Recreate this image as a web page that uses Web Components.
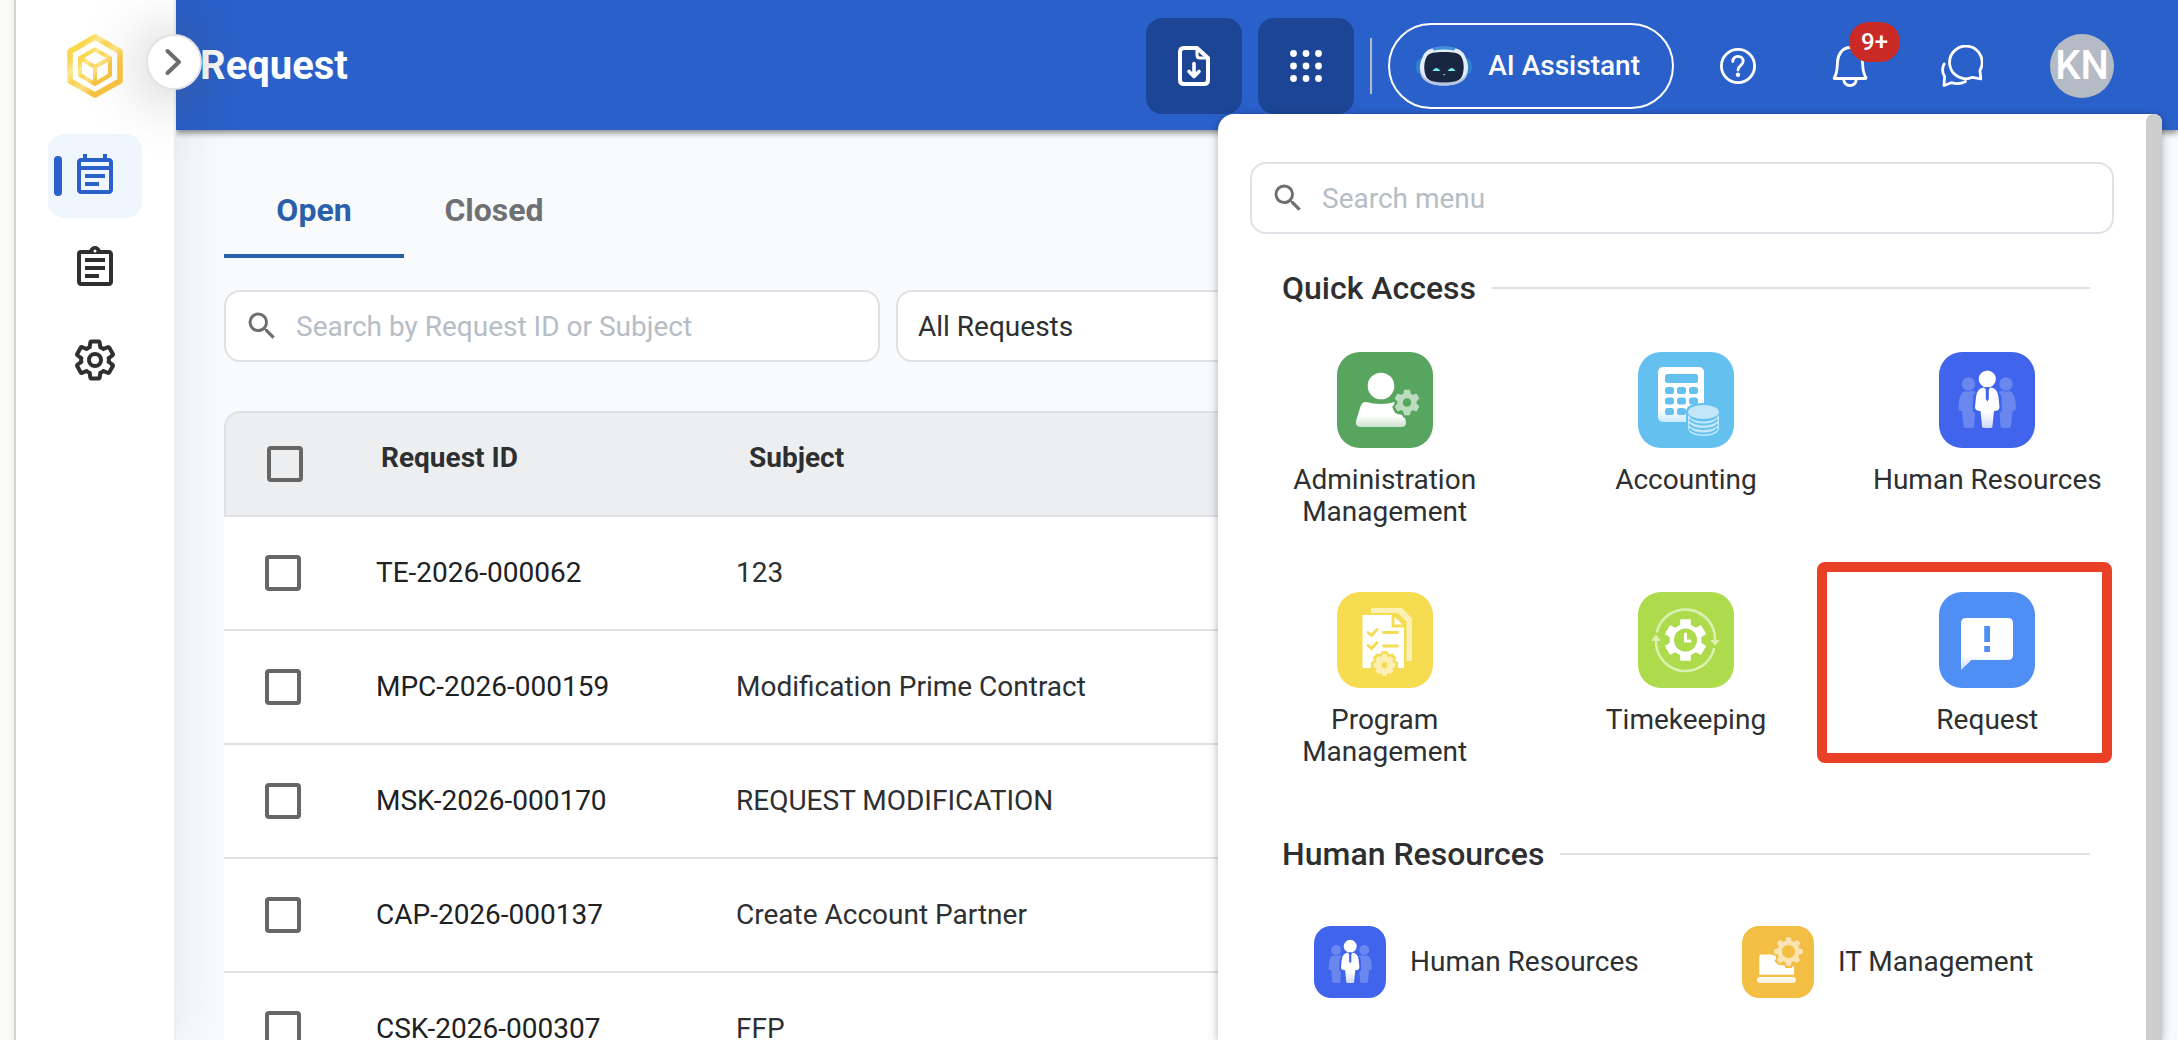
<!DOCTYPE html>
<html lang="en">
<head>
<meta charset="utf-8">
<title>Request</title>
<style>
  html, body { margin: 0; height: 100%; }
  body {
    font-family: Roboto, "Liberation Sans", sans-serif;
    font-size: 28px; line-height: 32px; color: #2d2f31;
    background: #fafaf8; overflow: hidden;
  }
</style>
</head>
<body>
<app-shell>
  <side-nav slot="nav"></side-nav>
  <top-bar slot="bar" heading="Request"></top-bar>
  <request-page slot="page"></request-page>
  <app-menu slot="menu"></app-menu>
</app-shell>

<script>
const gear = (cx, cy, outer, root, teeth, base, tip) => {
  let d = '';
  for (let i = 0; i < teeth; i++) {
    const a = -90 + i * 360 / teeth;
    for (const [r, o] of [[root, -base], [outer, -tip], [outer, tip], [root, base]]) {
      const t = (a + o) * Math.PI / 180;
      d += (d ? 'L' : 'M') + (cx + r * Math.cos(t)).toFixed(2) + ' ' + (cy + r * Math.sin(t)).toFixed(2);
    }
  }
  return d + 'Z';
};
const hole = (cx, cy, r) => `M${cx - r} ${cy}a${r} ${r} 0 1 0 ${2 * r} 0a${r} ${r} 0 1 0 ${-2 * r} 0Z`;
const fade = (id, y1, y2, to = .65) => `<defs><linearGradient id="${id}" gradientUnits="userSpaceOnUse" x1="0" x2="0" y1="${y1}" y2="${y2}"><stop stop-color="#fff"/><stop offset="1" stop-color="#fff" stop-opacity="${to}"/></linearGradient></defs>`;
const tile = (color, art) => `<rect width="96" height="96" rx="23" fill="${color}"/>${art}`;

const ICONS = {
  logo: ['0 0 56 64', `<defs><linearGradient id="g" x1="0" y1="0" x2="1" y2="1"><stop stop-color="#fad648"/><stop offset=".2" stop-color="#f9d850"/><stop offset=".3" stop-color="#fde992"/><stop offset=".42" stop-color="#f8d24c"/><stop offset=".55" stop-color="#fbe084"/><stop offset=".7" stop-color="#f5c344"/><stop offset="1" stop-color="#f5bd3e"/></linearGradient></defs>
    <g fill="none" stroke="url(#g)" stroke-linejoin="round"><path d="M28 3 53 17.500V47L28 61 3 47V17.500Z" stroke-width="5.600"/><path d="M28 15.500 43 24V41L28 50 13 41V24ZM13 24 28 33 43 24M28 33V50" stroke-width="4"/></g>`],
  chevron: ['0 0 24 32', `<path d="M5.500 5 17 16 5.500 27" fill="none" stroke="currentColor" stroke-width="4" stroke-linecap="round" stroke-linejoin="round"/>`],
  note: ['0 0 24 24', `<path fill="currentColor" d="M17 11H7v2h10v-2zm2-8h-1V1h-2v2H8V1H6v2H5c-1.110 0-2 .9-2 2v14c0 1.100.89 2 2 2h14c1.100 0 2-.9 2-2V5c0-1.100-.9-2-2-2zm0 16H5V9h14v10zM19 7H5V5h14v2zM14 15H7v2h7v-2z"/>`],
  clipboard: ['0 0 24 24', `<path fill="currentColor" fill-rule="evenodd" d="M7 15h7v2H7zm0-4h10v2H7zm0-4h10v2H7zm12-4h-4.180C14.400 1.840 13.300 1 12 1c-1.300 0-2.400.84-2.820 2H5a2 2 0 0 0-2 2v14c0 1.100.9 2 2 2h14c1.100 0 2-.9 2-2V5c0-1.100-.9-2-2-2zm-7-.25a.75.75 0 1 1 0 1.500.75.75 0 0 1 0-1.500zM19 19H5V5h14v14z"/>`],
  settings: ['0 0 24 24', `<path fill="currentColor" d="M13.850 22.250h-3.700c-.74 0-1.360-.54-1.450-1.270l-.27-1.890c-.27-.14-.53-.29-.79-.46l-1.800.72c-.7.26-1.470-.03-1.810-.65L2.200 15.530c-.35-.66-.2-1.440.36-1.880l1.530-1.190c-.01-.15-.02-.3-.02-.46 0-.15.01-.31.02-.46l-1.520-1.190c-.59-.45-.74-1.260-.37-1.880l1.850-3.190c.34-.62 1.110-.9 1.790-.63l1.810.73c.26-.17.52-.32.78-.46l.27-1.910c.09-.7.71-1.250 1.440-1.250h3.700c.74 0 1.360.54 1.450 1.270l.27 1.890c.27.14.53.29.79.46l1.800-.72c.71-.26 1.480.03 1.820.65l1.840 3.180c.36.66.2 1.440-.36 1.880l-1.520 1.190c.01.15.02.3.02.46s-.01.31-.02.46l1.520 1.190c.56.45.72 1.230.37 1.860l-1.860 3.220c-.34.62-1.110.9-1.800.63l-1.800-.72c-.26.17-.52.32-.78.46l-.27 1.910c-.1.680-.72 1.220-1.460 1.220zm-3.230-2h2.760l.37-2.550.53-.22c.44-.18.88-.44 1.340-.78l.45-.34 2.380.96 1.380-2.400-2.030-1.580.07-.56c.03-.26.06-.51.06-.78s-.03-.53-.06-.78l-.07-.56 2.030-1.580-1.390-2.400-2.390.96-.45-.35c-.42-.32-.87-.58-1.330-.77l-.52-.22-.37-2.550h-2.760l-.37 2.550-.53.21c-.44.19-.88.44-1.340.79l-.45.330-2.380-.95-1.390 2.390 2.030 1.580-.07.56a7 7 0 0 0-.06.790c0 .26.02.53.06.78l.07.56-2.030 1.580 1.380 2.400 2.390-.96.45.35c.43.330.86.58 1.330.77l.53.22.38 2.550z"/><circle cx="12" cy="12" r="3" fill="none" stroke="currentColor" stroke-width="2"/>`],
  search: ['0 0 24 24', `<path fill="currentColor" d="M15.500 14h-.79l-.28-.27A6.470 6.470 0 0 0 16 9.500 6.500 6.500 0 1 0 9.500 16c1.610 0 3.090-.59 4.230-1.570l.27.28v.79l5 4.990L20.490 19l-4.990-5zm-6 0C7.010 14 5 11.990 5 9.500S7.010 5 9.500 5 14 7.010 14 9.500 11.990 14 9.500 14z"/>`],
  download: ['0 0 32 40', `<g fill="none" stroke="#fff" stroke-linejoin="round" stroke-linecap="round"><path d="M19 2H6Q2 2 2 6V34Q2 38 6 38H26Q30 38 30 34V12Z" stroke-width="4"/><path d="M19 2V9Q19 12 22 12H30" stroke-width="3"/><path d="M16 17.500V30M11 25.500 16 30.500 21 25.500" stroke-width="3.600"/></g>`],
  apps: ['0 0 32 32', [3.5, 16, 28.5].map(y => [3.5, 16, 28.5].map(x => `<circle cx="${x}" cy="${y}" r="3.400" fill="#fff"/>`).join('')).join('')],
  robot: ['0 0 56 40', `<rect y="12" width="14" height="17" rx="7" fill="#2f7fcc"/><rect x="42" y="12" width="14" height="17" rx="7" fill="#2f7fcc"/><path d="M28 1C39 1 46 3 49 10C53 18 53 24 50 29C46 37 39 39.500 28 39.500S10 37 6 29C3 24 3 18 7 10C10 3 17 1 28 1Z" fill="#e4edfb"/><path d="M4 22Q6 37 28 37T52 22Q53 39.500 28 39.500T4 22Z" fill="#b4c6e2"/><path d="M16 2Q28-2 40 2L38 4.500Q28 2.500 18 4.500Z" fill="#3f8fda"/><path d="M28 6C37 6 43 6.500 45.500 11C48 16 48.500 23 46.500 29C44.500 35.500 37 36.500 28 36.500S11.500 35.500 9.500 29C7.500 23 8 16 10.500 11C13 6.500 19 6 28 6Z" fill="#192640"/><path d="M16.500 25Q20 19 24.500 25ZM31.500 25Q36 19 39.500 25ZM27 28H29.500L28.200 29.500Z" fill="#74f0f2"/>`],
  help: ['0 0 36 36', `<circle cx="18" cy="18" r="16.600" fill="none" stroke="#fff" stroke-width="2.800"/><path d="M12.800 13.500C12.800 6.500 23.200 7 23.200 13.300C23.200 17.300 18 17.500 18 22" fill="none" stroke="#fff" stroke-width="2.800" stroke-linecap="round"/><circle cx="18" cy="26.800" r="2.200" fill="#fff"/>`],
  bell: ['0 0 36 42', `<path d="M2.500 32.500C5.500 27 5 24 5.500 17C6 9 10.500 2.500 18 2.500S30 9 30.500 17C31 24 30.500 27 34 32.500Q34.500 33.500 33 33.500H3Q1.500 33.500 2.500 32.500Z" fill="none" stroke="#fff" stroke-width="2.800"/><path d="M11.500 34Q12.500 40.500 18 40.500T24.500 34" fill="none" stroke="#fff" stroke-width="2.800"/>`],
  chat: ['0 0 42 42', `<g fill="none" stroke="#fff" stroke-width="2.800" stroke-linecap="round" stroke-linejoin="round"><path d="M39 25.500A16.300 16.300 0 1 0 31.500 32.300L39.800 34Z"/><path d="M3.200 19C.8 23 1.500 28 3.600 31.500L3 40.500L10.500 37.700C16 39.500 21 38.500 24.500 36.500"/></g>`],
  admin: ['0 0 96 96', tile('#58a55f', fade('a', 64, 76) + `<circle cx="44" cy="34" r="13.300" fill="#fff"/><path d="M29 50Q44 54 58 50Q53 62 64 62.500Q69 65 69 71Q69 75 64 75H24Q18 75 19 69L23 56Q25 49 29 50Z" fill="url(#a)"/><path d="${gear(70, 50.5, 15.5, 12.5, 6, 22, 14)}" fill="#58a55f"/><path fill-rule="evenodd" stroke="#bcdcbf" stroke-linejoin="round" stroke-width="1.500" d="${gear(70, 50.5, 12.2, 9, 6, 20, 11)}${hole(70, 50.5, 5)}" fill="#bcdcbf"/>`)],
  accounting: ['0 0 96 96', tile('#63c0ef', fade('a', 58, 70) + `<rect x="20" y="15" width="46" height="55" rx="5" fill="url(#a)"/><g fill="#63c0ef"><rect x="27" y="22" width="33" height="9" rx="2.500"/>${[35, 45.5, 56].map(y => [27, 39, 51].map(x => `<rect x="${x}" y="${y}" width="9" height="7" rx="2.800"/>`).join('')).join('')}<path d="M48 60Q48 51 65.500 51T83 60V86H48Z"/></g><g fill="#c3e6f9"><ellipse cx="65.500" cy="60" rx="15.500" ry="7"/><path d="M50 62.500Q54 69.500 65.500 69.500T81 62.500V77Q79 84 65.500 84T50 77Z"/></g><g fill="none" stroke="#63c0ef" stroke-width="2"><path d="M51.500 67.500Q55 72.500 65.500 72.500T79.500 67.500M51.500 72.500Q55 77 65.500 77T79.500 72.500M51.500 76.500Q55 81.500 65.500 81.500T79.500 76.500"/></g>`)],
  people: ['0 0 96 96', tile('#4065ec', fade('a', 60, 76, .75) + `<g fill="#6a87f0"><circle cx="29.500" cy="32" r="6.700"/><circle cx="67" cy="32" r="6.700"/><path d="M27 39Q21 40 20 49L19.500 56Q19.500 59 23 59L24.500 74Q25 76 27 76H33Q35 76 35 74L36 61Q33 60 33.500 55L34 45Q34.500 42 37 40Q34 38.500 31 39L29.500 40Z"/><path d="M69.500 39Q75.500 40 76.500 49L77 56Q77 59 73.500 59L72 74Q71.500 76 69.500 76H63.500Q61.500 76 61.500 74L60.500 61Q63.500 60 63 55L62.500 45Q62 42 59.500 40Q62.500 38.500 65.500 39L67 40Z"/></g><circle cx="48.300" cy="27" r="8.600" fill="#fff"/><path d="M45 35.500Q38 36 37 45L36 55Q36 59 41.500 59L43 74Q43 76 45 76H51.500Q53.500 76 53.500 74L55 59Q60.500 59 60.500 55L59.500 45Q58.500 36 51.500 35.500L48.300 39Z" fill="url(#a)"/><path d="M46.800 35H49.800V47L48.300 49.500L46.800 47Z" fill="#4065ec"/>`)],
  program: ['0 0 96 96', tile('#f6dc50', `<path d="M34 16H65L75 26.500V69H69.500V30L61 21H34Z" fill="#fcf1b5"/><path d="M25.500 23H54.500V35.500H67V76H25.500ZM57.500 25 65.500 32.500H57.500Z" fill="#fff"/><g fill="none" stroke="#f6dc50" stroke-width="2.800" stroke-linecap="round"><path d="M31 40.500 34.500 43.500 40 37.500M31 53.500 34.500 56.500 40 50.500M46.500 40.500H60.500M46.500 54H60.500"/></g><path d="${gear(47.5, 73, 14, 12, 8, 18, 12)}" fill="#f6dc50"/><path fill-rule="evenodd" stroke="#fcf1b5" stroke-linejoin="round" stroke-width="1" d="${gear(47.5, 73, 10.5, 8.5, 8, 16, 10)}${hole(47.5, 73, 3.5)}" fill="#fcf1b5"/>`)],
  time: ['0 0 96 96', tile('#addb4b', `<g fill="none" stroke="#dcf0b2" stroke-width="2.600" stroke-linecap="round"><path d="M19 39.500A29.500 29.500 0 0 1 77 48M76 57A29.500 29.500 0 0 1 18 48"/></g><path d="M14 48.500 18 43 22 48.500ZM73 48.500 77 53 81 48.500Z" fill="#dcf0b2" stroke="#dcf0b2" stroke-linejoin="round"/><path fill-rule="evenodd" d="${gear(47.5, 48, 21.5, 16, 6, 20, 14)}${hole(47.5, 48, 11.5)}" fill="#fff"/><path d="M47.500 42V49H52" fill="none" stroke="#fff" stroke-width="3" stroke-linecap="round"/>`)],
  request: ['0 0 96 96', tile('#4f8ff3', fade('a', 64, 79) + `<path d="M27 26H69Q74 26 74 31V63Q74 68 69 68H32.500L22 78V31Q22 26 27 26Z" fill="url(#a)"/><path d="M45.200 34H51V50H45.200ZM45.200 54H51V60H45.200Z" fill="#4f8ff3"/>`)],
  it: ['0 0 96 96', tile('#f2be43', fade('a', 66, 77, .75) + `<path d="M26 38H44L50 52L69.500 54V65H23V41Q23 38 26 38Z" fill="#fff"/><rect x="20" y="68" width="52" height="8" rx="4" fill="url(#a)"/><path d="${gear(62, 34, 22.5, 18, 8, 18, 11)}" fill="#f2be43"/><path fill-rule="evenodd" stroke="#fae4b3" stroke-linejoin="round" stroke-width="1.500" d="${gear(62, 34, 18.5, 14, 8, 15, 7)}${hole(62, 34, 9.5)}" fill="#fae4b3"/>`)]
};

const define = (name, html, setup) => {
  const tpl = document.createElement('template');
  tpl.innerHTML = `<style>*{box-sizing:border-box}</style>` + html;
  customElements.define(name, class extends HTMLElement {
    constructor() { super(); this.attachShadow({ mode: 'open' }); }
    connectedCallback() {
      if (this.shadowRoot.childNodes.length) return;
      this.shadowRoot.append(tpl.content.cloneNode(true));
      if (setup) setup(this, this.shadowRoot);
    }
  });
};

define('x-icon', `<style>:host{display:block;flex:none}svg{display:block;width:100%;height:100%}</style>`, (el, root) => {
  const [box, art] = ICONS[el.getAttribute('name')];
  root.innerHTML += `<svg viewBox="${box}" aria-hidden="true">${art}</svg>`;
});

define('app-shell', `<style>
  :host{display:grid;grid-template-columns:162px minmax(0,1fr);grid-template-rows:auto minmax(0,1fr);height:100vh;padding-left:14px;box-sizing:border-box;position:relative;overflow:hidden;background:linear-gradient(90deg,#fbfbf9 8px,#f3f3f1 14px)}
  ::slotted([slot=nav]){grid-row:1/3;z-index:3}
  ::slotted([slot=bar]){grid-column:2;z-index:2}
  ::slotted([slot=page]){grid-column:2;min-height:0;overflow:hidden}
  ::slotted([slot=menu]){position:absolute;z-index:5;top:114px;right:16px;bottom:0;width:944px}
</style><slot name="nav"></slot><slot name="bar"></slot><slot name="page"></slot><slot name="menu"></slot>`);

define('side-nav', `<style>
  :host{display:block;position:relative;background:#fff;border-left:2px solid #d3d3d3;border-right:2px solid #eceef1;box-shadow:0 0 50px rgba(40,50,70,.1);clip-path:inset(0 -60px 0 0)}
  nav{display:flex;flex-direction:column;align-items:center;gap:8px;padding-top:34px}
  .logo{width:56px;height:64px;margin-bottom:28px}
  a{display:flex;align-items:center;justify-content:center;position:relative;width:94px;height:84px;border-radius:16px;color:#2d2f31}
  a x-icon{width:48px;height:48px}
  a[aria-current]{background:#eff6fe;color:#2a60ca}
  a[aria-current]::before{content:"";position:absolute;left:6px;top:22px;width:8px;height:40px;border-radius:4px;background:#2a60ca}
  button{position:absolute;right:-28px;top:34px;width:56px;height:56px;border:2px solid #e2e3e8;border-radius:50%;background:#fff;color:#6b6d70;padding:0;display:grid;place-items:center;box-shadow:0 4px 60px 2px rgba(90,90,90,.4)}
  .logo,a{z-index:1;position:relative}
  button x-icon{width:24px;height:32px}
</style>
<nav aria-label="Main"><x-icon class="logo" name="logo"></x-icon>
<a href="#requests" aria-current="page" aria-label="Requests"><x-icon name="note"></x-icon></a>
<a href="#tasks" aria-label="Tasks"><x-icon name="clipboard"></x-icon></a>
<a href="#settings" aria-label="Settings"><x-icon name="settings"></x-icon></a></nav>
<button type="button" aria-label="Expand menu"><x-icon name="chevron"></x-icon></button>`);

define('top-bar', `<style>
  :host{display:flex;align-items:center;height:130px;padding:2px 64px 0 24px;box-sizing:border-box;background:#2a60ca;color:#fff;box-shadow:0 3px 6px rgba(0,0,0,.45);position:relative}
  h1{margin:0 auto 0 0;font-size:40px;line-height:48px;font-weight:700}
  button{font:inherit;color:inherit;border:0;padding:0;background:none;display:flex;align-items:center;justify-content:center}
  .tools{display:flex;align-items:center;gap:16px;margin-right:24px}
  .square{width:96px;height:96px;border-radius:16px;background:#1c4695}
  .rule{width:2px;height:56px;background:#b6bdc6}
  .ai{height:86px;padding:0 32px 0 26px;gap:16px;border:2px solid #fff;border-radius:43px;font-weight:500}
  .status{display:flex;gap:32px;margin-right:48px}
  .status button{width:80px;height:64px;position:relative}
  .badge{position:absolute;left:39px;top:-12px;width:51px;height:40px;border-radius:20px;background:#c92a25;font-size:24px;line-height:40px;font-weight:500}
  .avatar{width:64px;height:64px;border-radius:50%;background:#b4bbc4;font-size:40px;font-weight:500}
</style>
<h1></h1>
<div class="tools">
<button class="square" type="button" aria-label="Downloads"><x-icon name="download" style="width:32px;height:40px"></x-icon></button>
<button class="square" type="button" aria-label="Apps"><x-icon name="apps" style="width:32px;height:32px"></x-icon></button>
<span class="rule"></span>
<button class="ai" type="button"><x-icon name="robot" style="width:56px;height:40px"></x-icon>AI Assistant</button></div>
<div class="status">
<button type="button" aria-label="Help"><x-icon name="help" style="width:36px;height:36px"></x-icon></button>
<button type="button" aria-label="Notifications"><x-icon name="bell" style="width:36px;height:42px"></x-icon><span class="badge">9+</span></button>
<button type="button" aria-label="Messages"><x-icon name="chat" style="width:42px;height:42px"></x-icon></button></div>
<button class="avatar" type="button">KN</button>`, (el, root) => { root.querySelector('h1').textContent = el.getAttribute('heading'); });

define('search-box', `<style>
  :host{display:block}
  label{display:flex;align-items:center;gap:16px;height:72px;padding:0 18px;border:2px solid #e0e1e6;border-radius:16px;background:#fff;color:#6e6e6e}
  x-icon{width:36px;height:36px}
  input{flex:1;min-width:0;height:40px;border:0;outline:0;padding:0;background:none;font:inherit;color:#2d2f31}
  input::placeholder{color:#b6bdc6;opacity:1}
</style><label><x-icon name="search"></x-icon><input type="search"></label>`, (el, root) => {
  const input = root.querySelector('input');
  input.placeholder = el.getAttribute('placeholder');
  input.setAttribute('aria-label', input.placeholder);
});

define('request-page', `<style>
  :host{display:block;background:#f9fafc;padding:32px 40px 0 48px}
  .tabs{display:flex}
  .tabs button{min-width:180px;height:96px;border:0;border-bottom:4px solid transparent;border-top:4px solid transparent;padding:0;background:none;font:700 32px/40px Roboto,sans-serif;color:#6e7073}
  .tabs [aria-selected=true]{color:#2a5fa9;border-bottom-color:#2a5fa9}
  .filters{display:flex;gap:16px;margin:32px 0 49px}
  search-box{width:656px}
  select{appearance:none;width:656px;height:72px;padding:2px 20px 0;border:2px solid #e0e1e6;border-radius:16px;background:#fff;font:inherit;color:#2d2f31}
  table{width:100%;table-layout:fixed;border-collapse:separate;border-spacing:0;text-align:left;white-space:nowrap}
  thead tr{height:106px}
  th{background:#edeef0;border:0 solid #e0e1e6;border-width:2px 0;padding:0 0 12px 13px;font-weight:700}
  th:first-child{border-left-width:2px;border-top-left-radius:16px;padding:0 0 0 41px}
  th:nth-child(2){padding-left:5px}
  tbody tr{height:114px}
  td{background:#fff;border-bottom:2px solid #e0e1e6;padding:0}
  td:first-child{padding-left:41px}
  td:nth-child(2){color:#202123}
  input{appearance:none;display:block;width:36px;height:36px;margin:0;border:4px solid #666;border-radius:4px;background:transparent}
  .pick{width:152px}.id{width:360px}
</style>
<div class="tabs" role="tablist"><button type="button" role="tab" aria-selected="true">Open</button><button type="button" role="tab" aria-selected="false">Closed</button></div>
<div class="filters"><search-box placeholder="Search by Request ID or Subject"></search-box><select aria-label="Request filter"><option>All Requests</option></select></div>
<table><thead><tr><th class="pick"><input type="checkbox" aria-label="Select all"></th><th class="id">Request ID</th><th>Subject</th></tr></thead><tbody></tbody></table>`, (el, root) => {
  root.querySelector('tbody').innerHTML = [
    ['TE-2026-000062', '123'],
    ['MPC-2026-000159', 'Modification Prime Contract'],
    ['MSK-2026-000170', 'REQUEST MODIFICATION'],
    ['CAP-2026-000137', 'Create Account Partner'],
    ['CSK-2026-000307', 'FFP']
  ].map(([id, subject]) => `<tr><td><input type="checkbox" aria-label="Select ${id}"></td><td>${id}</td><td>${subject}</td></tr>`).join('');
});

define('menu-section', `<style>
  :host{display:block}
  h2{display:flex;align-items:center;gap:16px;margin:0 24px 0 32px;font-size:32px;line-height:40px;font-weight:500}
  h2::after{content:"";flex:1;height:2px;background:#e0e1e6}
</style><h2></h2><slot></slot>`, (el, root) => { root.querySelector('h2').textContent = el.getAttribute('heading'); });

define('app-tile', `<style>
  :host{display:block;position:relative}
  a{display:flex;flex-direction:column;align-items:center;gap:16px;color:inherit;text-decoration:none;text-align:center;padding:0 30px}
  x-icon{width:96px;height:96px}
  :host([compact]) a{flex-direction:row;gap:24px;padding:0;text-align:left}
  :host([compact]) x-icon{width:72px;height:72px}
  :host([marked])::after{content:"";position:absolute;left:-20px;top:-30px;width:295px;height:201px;box-sizing:border-box;border:10px solid #ea4026;border-radius:8px}
</style><a href="#app"><span><slot></slot></span></a>`, (el, root) => {
  const icon = document.createElement('x-icon');
  icon.setAttribute('name', el.getAttribute('icon'));
  root.querySelector('a').prepend(icon);
});

define('app-menu', `<style>
  :host{display:flex;background:#fff;border-radius:16px 8px 0 0;overflow:hidden;box-shadow:0 2px 10px rgba(0,0,0,.3)}
  .body{flex:1;min-width:0;padding:48px 32px 0;overflow:hidden}
  .bar{flex:none;width:16px;border-radius:8px 8px 0 0;background:#cdcdcd}
  menu-section{display:block;margin-top:34px}
  .grid{display:grid;grid-template-columns:repeat(3,1fr);row-gap:64px;margin:44px -24px 0 -16px}
  .list{display:grid;grid-template-columns:repeat(2,1fr);margin:52px -56px 0 64px}
  menu-section+menu-section{margin-top:66px}
</style>
<div class="body">
<search-box placeholder="Search menu"></search-box>
<menu-section heading="Quick Access"><div class="grid">
<app-tile icon="admin">Administration Management</app-tile>
<app-tile icon="accounting">Accounting</app-tile>
<app-tile icon="people">Human Resources</app-tile>
<app-tile icon="program">Program Management</app-tile>
<app-tile icon="time">Timekeeping</app-tile>
<app-tile icon="request" marked>Request</app-tile></div></menu-section>
<menu-section heading="Human Resources"><div class="list">
<app-tile compact icon="people">Human Resources</app-tile>
<app-tile compact icon="it">IT Management</app-tile></div></menu-section>
</div><div class="bar"></div>`);
</script>
</body>
</html>
